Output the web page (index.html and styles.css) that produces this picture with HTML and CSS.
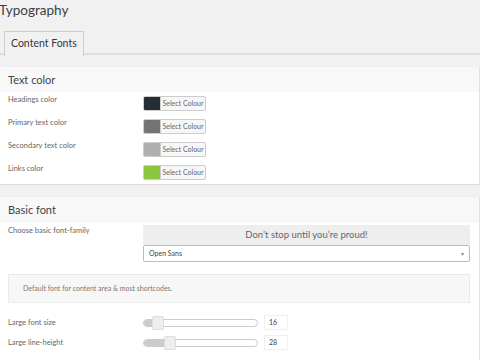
FILE: index.html
```html
<!DOCTYPE html>
<html lang="en">
<head>
    <meta charset="UTF-8">
    <meta name="viewport" content="width=device-width, initial-scale=1.0">
    <title>Typography</title>
    <link rel="stylesheet" href="styles.css">
</head>
<body>

<!-- Page title and tabs -->
<h1 class="page-title">Typography</h1>
<div class="tabs">
    <span class="tab active">Content Fonts</span>
</div>

<!-- Text colours -->
<div class="panel">
    <div class="panel-head">Text color</div>
    <div class="row">
        <div class="row-label">Headings color</div>
        <div class="color-btn"><span class="swatch" style="background:#262d36"></span><span class="btn-text">Select Colour</span></div>
    </div>
    <div class="row">
        <div class="row-label">Primary text color</div>
        <div class="color-btn"><span class="swatch" style="background:#747474"></span><span class="btn-text">Select Colour</span></div>
    </div>
    <div class="row">
        <div class="row-label">Secondary text color</div>
        <div class="color-btn"><span class="swatch" style="background:#b0b0b0"></span><span class="btn-text">Select Colour</span></div>
    </div>
    <div class="row">
        <div class="row-label">Links color</div>
        <div class="color-btn"><span class="swatch" style="background:#8cc63e"></span><span class="btn-text">Select Colour</span></div>
    </div>
</div>

<!-- Basic font -->
<div class="panel panel-long">
    <div class="panel-head head-tall">Basic font</div>
    <div class="row font-row">
        <div class="row-label">Choose basic font-family</div>
        <div class="font-field">
            <div class="preview">Don&rsquo;t stop until you&rsquo;re proud!</div>
            <div class="select">Open Sans<span class="arrow">&#9662;</span></div>
        </div>
    </div>
    <div class="note">Default font for content area &amp; most shortcodes.</div>
    <div class="sliders">
        <div class="row slider-row">
            <div class="row-label">Large font size</div>
            <div class="slider">
                <div class="track"><span class="fill" style="width:14px"></span><span class="handle" style="left:8px"></span></div>
                <span class="value">16</span>
            </div>
        </div>
        <div class="row slider-row">
            <div class="row-label">Large line-height</div>
            <div class="slider">
                <div class="track"><span class="fill" style="width:26px"></span><span class="handle" style="left:20px"></span></div>
                <span class="value">28</span>
            </div>
        </div>
    </div>
    <div class="next-field"></div>
</div>

</body>
</html>
```

FILE: styles.css
```css
/* Base page */
html, body {
    height: 360px;
    overflow: hidden;
}

body {
    margin: 0;
    background-color: #f1f1f1;
    font-family: Lato, "Open Sans", sans-serif;
    color: #555;
}

.page-title {
    margin: 0 0 0 -1px;
    font-size: 13.5px;
    line-height: 20px;
    font-weight: 400;
    color: #3a3f44;
}

/* Tabs */
.tabs {
    margin-top: 11px;
    padding-left: 4px;
    height: 22px;
    border-bottom: 2px solid #dedede;
    display: flex;
}

.tab {
    height: 22px;
    padding: 0 6px;
    border: 1px solid #ccc;
    border-bottom: none;
    background-color: #f1f1f1;
    font-size: 10.5px;
    line-height: 22px;
    color: #32373c;
}

.tab.active {
    height: 24px;
}

/* Panels */
.panel {
    margin: 12px 1px 0 0;
    background-color: #fff;
    box-shadow: 0 1px 1px rgba(0, 0, 0, 0.08), 1px 0 1px rgba(0, 0, 0, 0.05);
}

.panel + .panel {
    margin-top: 13px;
}

.panel-head {
    height: 25px;
    padding-left: 8px;
    background-color: #f8f8f8;
    font-size: 11px;
    line-height: 25px;
    color: #444;
}

.head-tall {
    height: 26px;
    line-height: 26px;
}

.row {
    display: flex;
    height: 23px;
    padding: 4px 0 0 8px;
    box-sizing: border-box;
}

.row-label {
    width: 135px;
    flex-shrink: 0;
    margin-top: -2px;
    font-size: 7.5px;
    line-height: 12px;
    color: #666;
}

/* Colour picker button */
.color-btn {
    display: flex;
    height: 13px;
    border: 1px solid #ccc;
    border-radius: 2px;
    background-color: #f7f7f7;
    overflow: hidden;
}

.swatch {
    width: 16px;
    border-right: 1px solid #ccc;
}

.btn-text {
    width: 44px;
    font-size: 7px;
    line-height: 13px;
    text-align: center;
    color: #666;
}

/* Font family field */
.font-row {
    height: auto;
    padding-top: 2px;
}

.font-row .row-label {
    margin-top: 0;
}

.font-field {
    width: 327px;
}

.preview {
    height: 20px;
    background-color: #eee;
    font-size: 9.5px;
    line-height: 20px;
    text-align: center;
    color: #666;
}

.select {
    position: relative;
    height: 15px;
    padding-left: 5px;
    border: 1px solid #bbb;
    border-radius: 2px;
    background-color: #fff;
    font-size: 7px;
    line-height: 15px;
    color: #444;
}

.arrow {
    position: absolute;
    right: 5px;
    top: 0;
    font-size: 6px;
    color: #888;
}

.note {
    margin: 12px 9px 0 8px;
    height: 27px;
    padding-left: 14px;
    border: 1px solid #eaeaea;
    background-color: #f7f7f7;
    font-size: 7px;
    line-height: 27px;
    color: #777;
}

/* Sliders */
.sliders {
    padding-top: 13px;
}

.slider-row {
    height: 20px;
    padding-top: 0;
}

.slider-row .row-label {
    margin-top: 1px;
}

.slider {
    display: flex;
    align-items: center;
    height: 13px;
}

.track {
    position: relative;
    width: 113px;
    height: 6px;
    border: 1px solid #ccc;
    border-radius: 4px;
    background-color: #fff;
}

.fill {
    position: absolute;
    left: 0;
    top: 0;
    height: 6px;
    border-radius: 4px 0 0 4px;
    background-color: #ccc;
}

.handle {
    position: absolute;
    top: -4px;
    width: 10px;
    height: 12px;
    border: 1px solid #ddd;
    border-radius: 2px;
    background-color: #eee;
}

.value {
    margin-left: 6px;
    width: 18px;
    height: 13px;
    padding-left: 4px;
    border: 1px solid #f0f0f0;
    font-size: 7px;
    line-height: 13px;
    color: #444;
}

.next-field {
    margin: 9px 0 0 339px;
    height: 3px;
    border-top: 1px solid #e5e5e5;
    border-left: 1px solid #e5e5e5;
}
```
